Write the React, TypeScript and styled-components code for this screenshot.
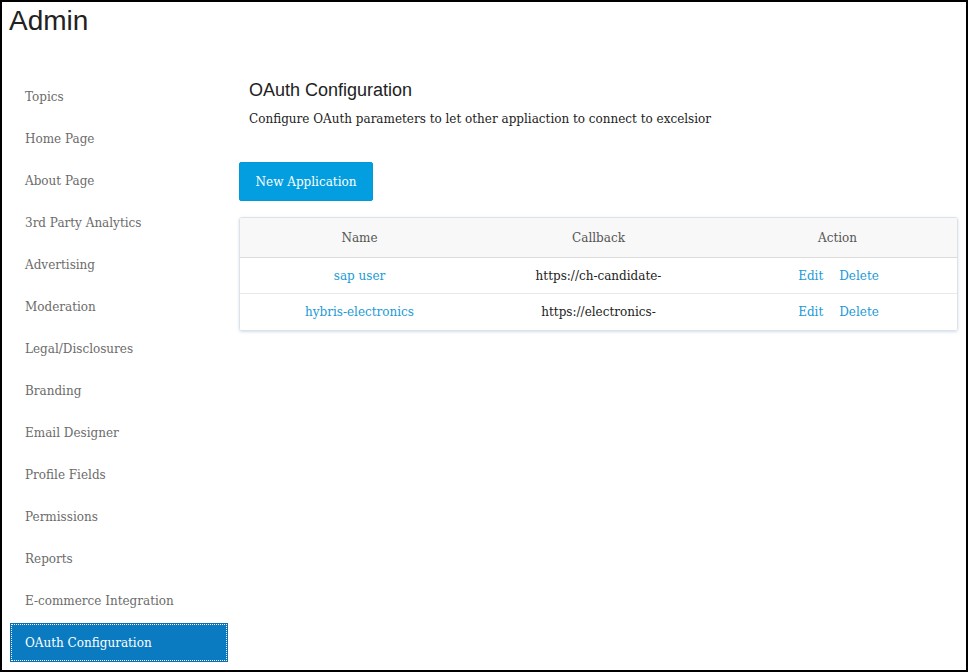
import React from "react";
import styled, { createGlobalStyle } from "styled-components";

const Global = createGlobalStyle`
  html, body { margin: 0; padding: 0; background: #fff; }
  * { box-sizing: border-box; }
`;

const serif = `"DejaVu Serif", "Liberation Serif", serif`;
const sans = `"Liberation Sans", Arial, sans-serif`;

const Frame = styled.div`
  width: 968px;
  height: 672px;
  border: 2px solid #000;
  background: #fff;
  font-family: ${serif};
  overflow: hidden;
`;

const Title = styled.h1`
  margin: 0;
  padding-left: 7px;
  height: 38px;
  line-height: 38px;
  font-family: ${sans};
  font-weight: normal;
  font-size: 28px;
  color: #222;
`;

const Body = styled.div`
  display: grid;
  grid-template-columns: 218px 1fr;
  column-gap: 11px;
  padding: 0 8px;
`;

const Sidebar = styled.nav`
  display: flex;
  flex-direction: column;
  gap: 3px;
  padding-top: 37px;
`;

const NavItem = styled.a<{ $active?: boolean }>`
  display: flex;
  align-items: center;
  height: 39px;
  padding-left: 14px;
  padding-top: 1px;
  font-size: 12px;
  color: ${(p) => (p.$active ? "#fff" : "#6b6b6b")};
  background: ${(p) => (p.$active ? "#0a7bc1" : "transparent")};
  outline: ${(p) => (p.$active ? "1px dotted #fff" : "none")};
  outline-offset: -2px;
  border: 1px solid ${(p) => (p.$active ? "#0a6fae" : "transparent")};
  text-decoration: none;
  cursor: pointer;
`;

const Main = styled.main`
  display: flex;
  flex-direction: column;
  align-items: flex-start;
  padding-top: 40px;
`;

const Heading = styled.h3`
  margin: 0 0 0 10px;
  line-height: 20px;
  font-family: ${sans};
  font-weight: normal;
  font-size: 18px;
  color: #222;
`;

const Lead = styled.p`
  margin: 9px 0 0 10px;
  line-height: 20px;
  font-size: 12px;
  color: #222;
`;

const PrimaryButton = styled.button`
  margin-top: 33px;
  height: 39px;
  width: 134px;
  border: 1px solid #0398d8;
  border-radius: 2px;
  background: #029ee0;
  color: #fff;
  font-family: ${serif};
  font-size: 12px;
  cursor: pointer;
`;

const Card = styled.div`
  margin-top: 16px;
  align-self: stretch;
  border: 1px solid #dbe2ea;
  border-radius: 3px;
  box-shadow: 0 1px 3px rgba(160, 180, 205, 0.45);
  overflow: hidden;
`;

const Row = styled.div<{ $head?: boolean }>`
  display: grid;
  grid-template-columns: repeat(3, 1fr);
  align-items: center;
  height: ${(p) => (p.$head ? "40px" : "36px")};
  background: ${(p) => (p.$head ? "#f8f8f8" : "#fff")};
  border-bottom: 1px solid ${(p) => (p.$head ? "#dcdcdc" : "#e9e9e9")};
  &:last-child { border-bottom: none; }
  font-size: 12px;
  color: ${(p) => (p.$head ? "#555" : "#222")};
`;

const Cell = styled.div`
  text-align: center;
`;

const Actions = styled.div`
  display: flex;
  justify-content: center;
  gap: 16px;
  padding-left: 2px;
`;

const Link = styled.a`
  color: #1a9ad6;
  text-decoration: none;
  cursor: pointer;
`;

const navItems = [
  "Topics",
  "Home Page",
  "About Page",
  "3rd Party Analytics",
  "Advertising",
  "Moderation",
  "Legal/Disclosures",
  "Branding",
  "Email Designer",
  "Profile Fields",
  "Permissions",
  "Reports",
  "E-commerce Integration",
  "OAuth Configuration",
];

const apps = [
  { name: "sap user", callback: "https://ch-candidate-" },
  { name: "hybris-electronics", callback: "https://electronics-" },
];

export default function App() {
  return (
    <>
      <Global />
      <Frame>
        <Title>Admin</Title>
        <Body>
          <Sidebar>
            {navItems.map((n) => (
              <NavItem key={n} $active={n === "OAuth Configuration"}>
                {n}
              </NavItem>
            ))}
          </Sidebar>
          <Main>
            <Heading>OAuth Configuration</Heading>
            <Lead>Configure OAuth parameters to let other appliaction to connect to excelsior</Lead>
            <PrimaryButton>New Application</PrimaryButton>
            <Card>
              <Row $head>
                <Cell>Name</Cell>
                <Cell>Callback</Cell>
                <Cell>Action</Cell>
              </Row>
              {apps.map((a) => (
                <Row key={a.name}>
                  <Cell>
                    <Link>{a.name}</Link>
                  </Cell>
                  <Cell>{a.callback}</Cell>
                  <Actions>
                    <Link>Edit</Link>
                    <Link>Delete</Link>
                  </Actions>
                </Row>
              ))}
            </Card>
          </Main>
        </Body>
      </Frame>
    </>
  );
}
